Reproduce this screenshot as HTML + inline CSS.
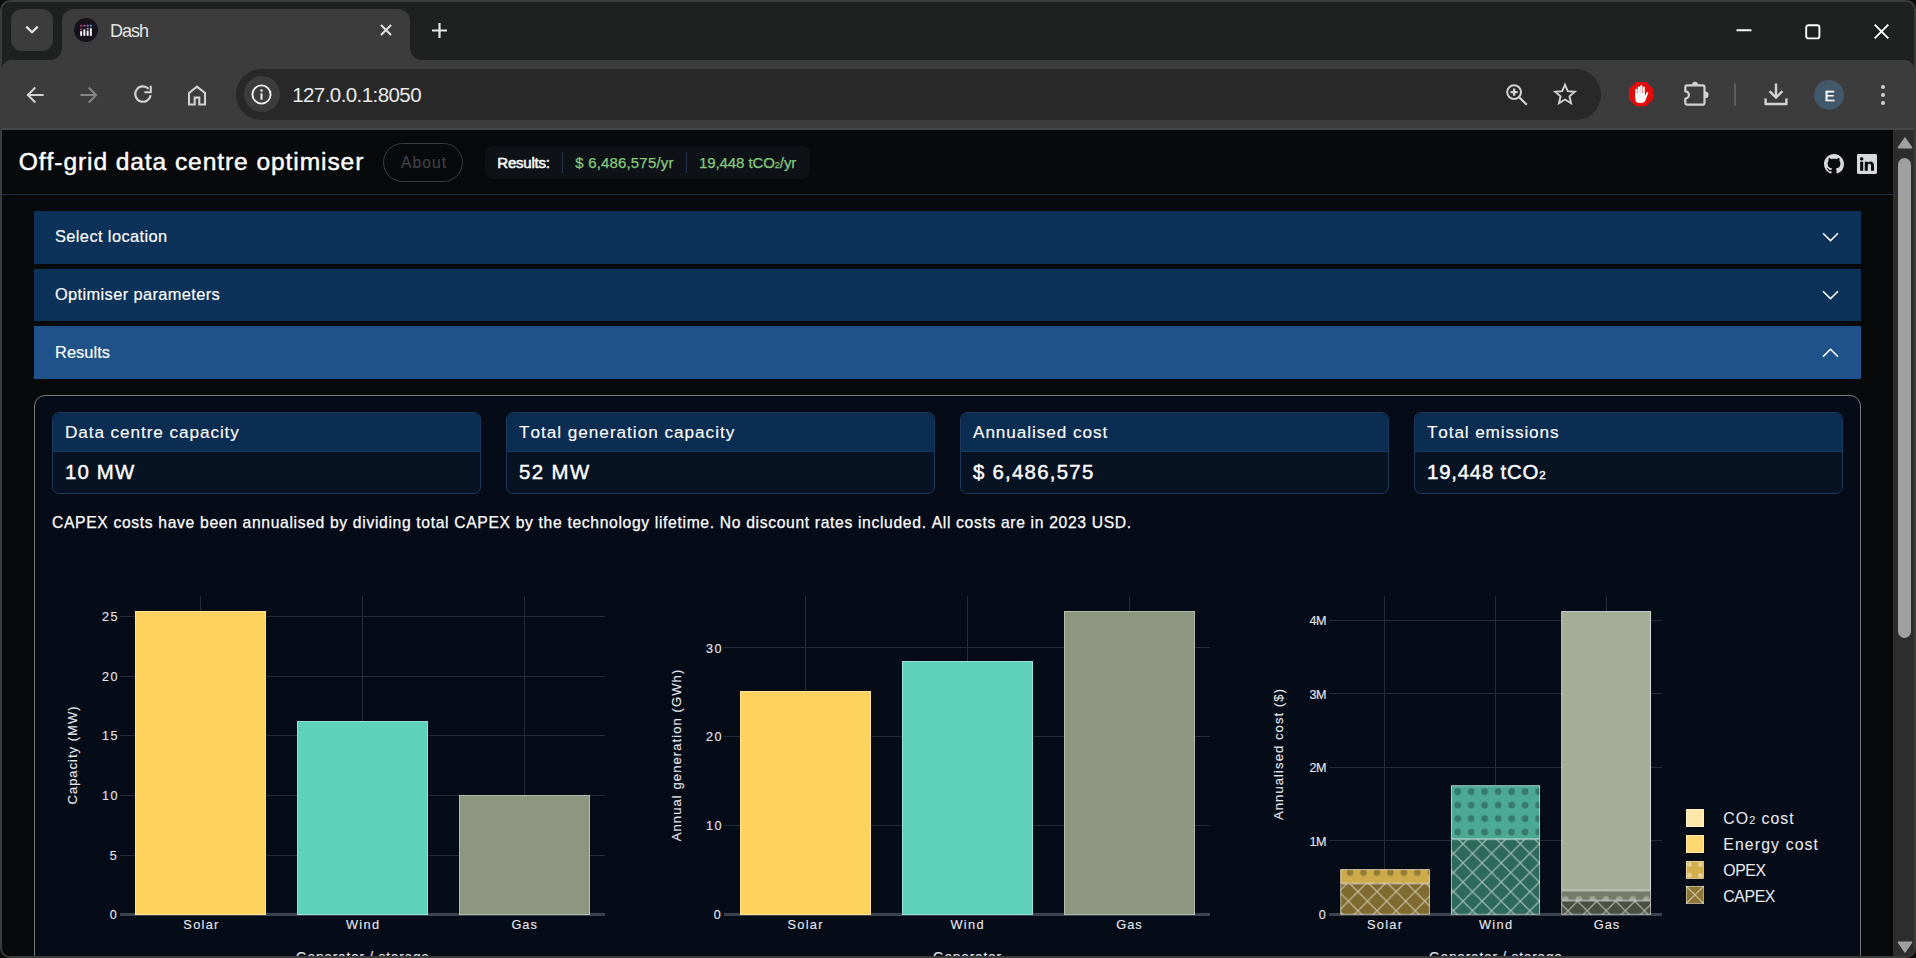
<!DOCTYPE html>
<html><head><meta charset="utf-8"><title>Dash</title>
<style>
html,body{margin:0;padding:0;background:#0d0d0d;}
body{width:1916px;height:958px;overflow:hidden;position:relative;font-family:"Liberation Sans",sans-serif;font-kerning:none;}
.r{position:absolute;box-sizing:border-box;}
.t{position:absolute;white-space:pre;line-height:1;font-family:"Liberation Sans",sans-serif;}
svg{position:absolute;overflow:visible;}
#win{position:absolute;left:0;top:0;width:1916px;height:958px;box-sizing:border-box;border:2px solid #3b3b3b;border-radius:10px;background:#1f2120;overflow:hidden;}
#in{position:absolute;left:-2px;top:-2px;width:1916px;height:958px;}
</style></head><body>
<div id="win"><div id="in">

<div class="r" style="left:11px;top:9px;width:42px;height:42px;background:#3c3c3c;border-radius:11px;"></div>
<svg style="left:24px;top:24px" width="16" height="12" viewBox="0 0 16 12"><path d="M2.3 2.6 L8 8.2 L13.7 2.6" fill="none" stroke="#e3e3e3" stroke-width="2.3"/></svg>
<div class="r" style="left:62px;top:9px;width:348px;height:52px;background:#3c3c3c;border-radius:12px 12px 0 0;"></div>
<svg style="left:50px;top:48px" width="12" height="12" viewBox="0 0 12 12"><path d="M12 0 V12 H0 A12 12 0 0 0 12 0Z" fill="#3c3c3c"/></svg>
<svg style="left:410px;top:48px" width="12" height="12" viewBox="0 0 12 12"><path d="M0 0 V12 H12 A12 12 0 0 1 0 0Z" fill="#3c3c3c"/></svg>
<div class="r" style="left:2px;top:60px;width:1912px;height:69px;background:#3c3c3c;border-radius:9px 9px 0 0;"></div>
<div class="r" style="left:2px;top:128px;width:1912px;height:2px;background:#474747;"></div>
<svg style="left:73.5px;top:18px" width="24" height="24" viewBox="0 0 24 24">
<circle cx="12" cy="12" r="12" fill="#15121b"/>
<rect x="6.2" y="13.2" width="1.9" height="4.6" fill="#fff"/><rect x="9.4" y="11.4" width="1.9" height="6.4" fill="#fff"/>
<rect x="12.7" y="12.6" width="1.9" height="5.2" fill="#fff"/><rect x="15.9" y="10.2" width="1.9" height="7.6" fill="#fff"/>
<rect x="6.2" y="10.6" width="1.9" height="1.7" fill="#e0457b"/><rect x="6.2" y="6.8" width="1.9" height="1.7" fill="#d6336c"/>
<rect x="9.4" y="6.8" width="1.9" height="1.7" fill="#d94f8e"/><rect x="12.7" y="6.8" width="1.9" height="1.7" fill="#a678d8"/>
<rect x="12.7" y="10" width="1.9" height="1.7" fill="#b88be0"/><rect x="15.9" y="6.8" width="1.9" height="1.7" fill="#52b6e6"/>
</svg>
<span class="t" style="top:22.26px;font-size:18px;color:#e3e3e3;letter-spacing:-1.007px;left:110.00px;">Dash</span>
<svg style="left:379.5px;top:24px" width="12" height="12" viewBox="0 0 12 12"><path d="M1 1 L11 11 M11 1 L1 11" stroke="#e3e3e3" stroke-width="2" fill="none"/></svg>
<svg style="left:432px;top:22.5px" width="15" height="15" viewBox="0 0 15 15"><path d="M7.5 0 V15 M0 7.5 H15" stroke="#e3e3e3" stroke-width="2.2" fill="none"/></svg>
<svg style="left:1736px;top:28.5px" width="16" height="3" viewBox="0 0 16 3"><rect x="0.5" y="0.3" width="15" height="2" rx="0.6" fill="#fff"/></svg>
<svg style="left:1805px;top:23.5px" width="16" height="16" viewBox="0 0 16 16"><rect x="1.2" y="1.2" width="13.2" height="13.2" rx="2.2" fill="none" stroke="#fff" stroke-width="1.9"/></svg>
<svg style="left:1874px;top:23.5px" width="15" height="15" viewBox="0 0 15 15"><path d="M0.7 0.7 L14.3 14.3 M14.3 0.7 L0.7 14.3" stroke="#fff" stroke-width="1.9" fill="none"/></svg>
<svg style="left:25.600px;top:85.5px" width="18" height="18" viewBox="0 0 18 18"><path d="M17.6 9 H2.4 M9.3 1.6 L1.9 9 L9.3 16.4" stroke="#d2d2d2" stroke-width="2.1" fill="none"/></svg>
<svg style="left:80px;top:85.5px" width="18" height="18" viewBox="0 0 18 18"><path d="M0.4 9 H15.6 M8.7 1.6 L16.1 9 L8.7 16.4" stroke="#858585" stroke-width="2.1" fill="none"/></svg>
<svg style="left:133px;top:84px" width="20" height="20" viewBox="0 0 20 20"><path d="M17.600 11.2 A7.700 7.700 0 1 1 15.6 4.8" stroke="#d2d2d2" stroke-width="2.1" fill="none"/><path d="M17.800 1.8 V8.2 H11.400" stroke="#d2d2d2" stroke-width="2.1" fill="none"/></svg>
<svg style="left:187px;top:84px" width="20" height="22" viewBox="0 0 20 22"><path d="M2 20.5 V9 L10 2.6 L18 9 V20.5 H12.3 V13.6 H7.7 V20.5 Z" stroke="#d2d2d2" stroke-width="2.1" fill="none"/></svg>
<div class="r" style="left:236px;top:69px;width:1365px;height:51px;background:#282828;border-radius:26px;"></div>
<div class="r" style="left:243.5px;top:76.4px;width:36px;height:36px;background:#3c3c3c;border-radius:18px;"></div>
<svg style="left:251px;top:84.4px" width="21" height="21" viewBox="0 0 21 21"><circle cx="10.5" cy="10.5" r="9.1" fill="none" stroke="#f0f0f0" stroke-width="1.9"/><rect x="9.5" y="9.3" width="2" height="6.4" fill="#f0f0f0"/><circle cx="10.5" cy="6.4" r="1.25" fill="#f0f0f0"/></svg>
<span class="t" style="top:85.15px;font-size:20.5px;color:#e9e9e9;letter-spacing:-0.569px;left:292.20px;">127.0.0.1:8050</span>
<svg style="left:1504px;top:82px" width="26" height="26" viewBox="0 0 26 26"><circle cx="10.1" cy="10.1" r="6.9" fill="none" stroke="#d2d2d2" stroke-width="2"/><path d="M15.2 15.2 L22.8 22.8" stroke="#d2d2d2" stroke-width="2.2"/><path d="M10.1 6.5 V13.7 M6.5 10.1 H13.700" stroke="#d2d2d2" stroke-width="2.3"/></svg>
<svg style="left:1553px;top:82px" width="24" height="24" viewBox="0 0 24 24"><path d="M12 2.6 L14.75 9.1 L21.8 9.7 L16.45 14.3 L18.05 21.2 L12 17.5 L5.95 21.2 L7.55 14.3 L2.2 9.7 L9.25 9.1 Z" fill="none" stroke="#d2d2d2" stroke-width="1.9" stroke-linejoin="miter"/></svg>
<svg style="left:1628.6px;top:82.1px" width="24.3" height="24.3" viewBox="0 0 24.3 24.3"><path d="M7.1 0 H17.2 L24.3 7.1 V17.2 L17.2 24.3 H7.1 L0 17.2 V7.1 Z" fill="#e30b0b"/>
<g fill="#fff"><rect x="6.3" y="6.7" width="2.15" height="9" rx="1.05"/><rect x="8.75" y="4.5" width="2.15" height="10" rx="1.05"/><rect x="11.2" y="3.0" width="2.15" height="11" rx="1.05"/><rect x="13.65" y="4.6" width="2.15" height="10" rx="1.05"/>
<path d="M6.3 11.5 H15.8 V14.6 L17.3 10.900 Q17.9 9.7 18.8 10.1 Q19.500 10.5 19.1 11.6 L16.6 18 Q15.500 21 12.2 21 H10.900 Q6.3 21 6.3 16.4 Z"/></g></svg>
<svg style="left:1683px;top:80px" width="28" height="28" viewBox="0 0 28 28"><circle cx="12" cy="4.6" r="2.9" fill="#d2d2d2"/><circle cx="22.200" cy="14.900" r="3.3" fill="#d2d2d2"/>
<path d="M4.3 5.3 H19.500 Q21.500 5.3 21.500 7.3 V22.700 Q21.500 24.700 19.500 24.700 H4.3 Q2.3 24.700 2.3 22.700 V18.5 A3.6 3.6 0 0 0 2.3 11.300 V7.3 Q2.3 5.3 4.3 5.3 Z" fill="#3c3c3c" stroke="#d2d2d2" stroke-width="2.2" stroke-linejoin="round"/></svg>
<div class="r" style="left:1733.5px;top:83px;width:2px;height:23px;background:#5c5c5c;border-radius:1px;"></div>
<svg style="left:1764px;top:82px" width="24" height="24" viewBox="0 0 24 24"><path d="M12 1.5 V15.2 M5.6 9.2 L12 15.6 L18.4 9.2" stroke="#d2d2d2" stroke-width="2.4" fill="none"/><path d="M1.6 16.6 V22 H22.4 V16.6" stroke="#d2d2d2" stroke-width="2.4" fill="none" stroke-linejoin="round"/></svg>
<div class="r" style="left:1814px;top:80px;width:30px;height:30px;background:#42596b;border-radius:15px;"></div>
<span class="t" style="top:87.68px;font-size:15.5px;color:#fff;letter-spacing:-1.139px;left:1824.40px;-webkit-text-stroke:0.3px #fff;">E</span>
<div class="r" style="left:1880.8px;top:84.6px;width:4.4px;height:4.4px;background:#d2d2d2;border-radius:50%;"></div>
<div class="r" style="left:1880.8px;top:92.8px;width:4.4px;height:4.4px;background:#d2d2d2;border-radius:50%;"></div>
<div class="r" style="left:1880.8px;top:101.0px;width:4.4px;height:4.4px;background:#d2d2d2;border-radius:50%;"></div>
<div class="r" style="left:2px;top:130px;width:1891px;height:826px;background:#08090b;"></div>
<div class="r" style="left:1893px;top:130px;width:21px;height:826px;background:#2d2d2d;"></div>
<svg style="left:1896.5px;top:137px" width="16" height="12" viewBox="0 0 16 12"><path d="M8 1.2 L14.6 10.6 H1.4 Z" fill="#a0a0a0" stroke="#a0a0a0" stroke-width="1.6" stroke-linejoin="round"/></svg>
<svg style="left:1896.5px;top:941px" width="16" height="12" viewBox="0 0 16 12"><path d="M8 10.8 L14.6 1.4 H1.4 Z" fill="#a0a0a0" stroke="#a0a0a0" stroke-width="1.6" stroke-linejoin="round"/></svg>
<div class="r" style="left:1898px;top:158px;width:13px;height:479.5px;background:#a0a0a0;border-radius:6.5px;"></div>
<div class="r" style="left:2px;top:194px;width:1891px;height:1px;background:#1e2d45;"></div>
<span class="t" style="top:150.48px;font-size:24.6px;color:#fff;letter-spacing:0.899px;left:18.80px;-webkit-text-stroke:0.45px #fff;">Off-grid data centre optimiser</span>
<div class="r" style="left:383px;top:143px;width:80px;height:39px;background:transparent;border:1px solid #3a3b3d;border-radius:20px;"></div>
<span class="t" style="top:154.99px;font-size:15.6px;color:#3d4147;letter-spacing:1.058px;left:401.00px;-webkit-text-stroke:0.2px #3d4147;">About</span>
<div class="r" style="left:485px;top:146px;width:324.5px;height:33px;background:#0e1217;border-radius:8px;"></div>
<span class="t" style="top:155.00px;font-size:15px;color:#fff;letter-spacing:-0.212px;left:497.30px;-webkit-text-stroke:0.5px #fff;">Results:</span>
<div class="r" style="left:562px;top:152px;width:1px;height:21px;background:#27364d;"></div>
<div class="r" style="left:686px;top:152px;width:1px;height:21px;background:#27364d;"></div>
<span class="t" style="top:155.00px;font-size:15px;color:#86c97d;letter-spacing:0.169px;left:575.30px;-webkit-text-stroke:0.25px #86c97d;">$ 6,486,575/yr</span>
<span class="t" style="top:155.00px;font-size:15px;color:#86c97d;letter-spacing:-0.092px;left:699.00px;-webkit-text-stroke:0.25px #86c97d;">19,448 tCO<span style="font-size:9px;letter-spacing:0">2</span>/yr</span>
<svg style="left:1824px;top:154px" width="20" height="20" viewBox="0 0 16 16"><path fill="#d6dadb" d="M8 0C3.58 0 0 3.58 0 8c0 3.54 2.29 6.53 5.47 7.59.4.07.55-.17.55-.38 0-.19-.01-.82-.01-1.49-2.01.37-2.53-.49-2.69-.94-.09-.23-.48-.94-.82-1.13-.28-.15-.68-.52-.01-.53.63-.01 1.08.58 1.23.82.72 1.21 1.87.87 2.33.66.07-.52.28-.87.51-1.07-1.78-.2-3.64-.89-3.64-3.95 0-.87.31-1.59.82-2.15-.08-.2-.36-1.02.08-2.12 0 0 .67-.21 2.2.82.64-.18 1.32-.27 2-.27.68 0 1.36.09 2 .27 1.53-1.04 2.2-.82 2.2-.82.44 1.1.16 1.92.08 2.12.51.56.82 1.27.82 2.15 0 3.07-1.87 3.75-3.65 3.95.29.25.54.73.54 1.48 0 1.07-.01 1.93-.01 2.2 0 .21.15.46.55.38A8.012 8.012 0 0 0 16 8c0-4.420-3.58-8-8-8z"/></svg>
<svg style="left:1857px;top:154px" width="20" height="20" viewBox="0 0 16 16"><path fill="#d6dadb" d="M0 1.146C0 .513.526 0 1.175 0h13.65C15.474 0 16 .513 16 1.146v13.708c0 .633-.526 1.146-1.175 1.146H1.175C.526 16 0 15.487 0 14.854V1.146zm4.943 12.248V6.169H2.542v7.225h2.401zm-1.200-8.212c.837 0 1.358-.554 1.358-1.248-.015-.709-.52-1.248-1.342-1.248-.822 0-1.359.54-1.359 1.248 0 .694.521 1.248 1.327 1.248h.016zm4.908 8.212V9.359c0-.216.016-.432.080-.586.173-.431.568-.878 1.232-.878.869 0 1.216.662 1.216 1.634v3.865h2.401V9.250c0-2.220-1.184-3.252-2.764-3.252-1.274 0-1.845.7-2.165 1.193v.025h-.016a5.540 5.540 0 0 1 .016-.025V6.169h-2.400c.03.678 0 7.225 0 7.225h2.400z"/></svg>
<div class="r" style="left:34px;top:211px;width:1827px;height:53px;background:#0d3259;"></div>
<div class="r" style="left:34px;top:269px;width:1827px;height:52px;background:#0d3259;"></div>
<div class="r" style="left:34px;top:326px;width:1827px;height:53px;background:#1e5288;"></div>
<span class="t" style="top:228.12px;font-size:16.4px;color:#fff;letter-spacing:0.395px;left:55.00px;-webkit-text-stroke:0.15px #fff;">Select location</span>
<span class="t" style="top:286.12px;font-size:16.4px;color:#fff;letter-spacing:0.375px;left:55.00px;-webkit-text-stroke:0.15px #fff;">Optimiser parameters</span>
<span class="t" style="top:344.12px;font-size:16.4px;color:#fff;letter-spacing:0.052px;left:55.00px;-webkit-text-stroke:0.15px #fff;">Results</span>
<svg style="left:1821.5px;top:231.9px" width="17" height="10" viewBox="0 0 17 10"><path d="M1 1.2 L8.5 8.6 L16 1.2" fill="none" stroke="#fff" stroke-width="1.5"/></svg>
<svg style="left:1821.5px;top:289.8px" width="17" height="10" viewBox="0 0 17 10"><path d="M1 1.2 L8.5 8.6 L16 1.2" fill="none" stroke="#fff" stroke-width="1.5"/></svg>
<svg style="left:1821.5px;top:347.6px" width="17" height="10" viewBox="0 0 17 10"><path d="M1 8.6 L8.5 1.2 L16 8.6" fill="none" stroke="#fff" stroke-width="1.5"/></svg>
<div class="r" style="left:34px;top:395px;width:1827px;height:600px;background:#060b18;border:1px solid #74777c;border-radius:11px;"></div>
<div class="r" style="left:52px;top:412px;width:429px;height:82px;border:1px solid #1c395c;border-radius:7px;background:#071323;overflow:hidden;"><div style="height:38px;background:#0c2d52;border-bottom:1px solid #1c395c;"></div></div>
<span class="t" style="top:424.24px;font-size:17.2px;color:#fff;letter-spacing:0.906px;left:65.00px;-webkit-text-stroke:0.12px #fff;">Data centre capacity</span>
<span class="t" style="top:461.73px;font-size:20.4px;color:#fff;letter-spacing:1.173px;left:65.00px;-webkit-text-stroke:0.42px #fff;">10 MW</span>
<div class="r" style="left:506px;top:412px;width:429px;height:82px;border:1px solid #1c395c;border-radius:7px;background:#071323;overflow:hidden;"><div style="height:38px;background:#0c2d52;border-bottom:1px solid #1c395c;"></div></div>
<span class="t" style="top:424.24px;font-size:17.2px;color:#fff;letter-spacing:0.968px;left:519.00px;-webkit-text-stroke:0.12px #fff;">Total generation capacity</span>
<span class="t" style="top:461.73px;font-size:20.4px;color:#fff;letter-spacing:1.398px;left:519.00px;-webkit-text-stroke:0.42px #fff;">52 MW</span>
<div class="r" style="left:960px;top:412px;width:429px;height:82px;border:1px solid #1c395c;border-radius:7px;background:#071323;overflow:hidden;"><div style="height:38px;background:#0c2d52;border-bottom:1px solid #1c395c;"></div></div>
<span class="t" style="top:424.24px;font-size:17.2px;color:#fff;letter-spacing:0.919px;left:973.00px;-webkit-text-stroke:0.12px #fff;">Annualised cost</span>
<span class="t" style="top:461.73px;font-size:20.4px;color:#fff;letter-spacing:1.253px;left:973.00px;-webkit-text-stroke:0.42px #fff;">$ 6,486,575</span>
<div class="r" style="left:1414px;top:412px;width:429px;height:82px;border:1px solid #1c395c;border-radius:7px;background:#071323;overflow:hidden;"><div style="height:38px;background:#0c2d52;border-bottom:1px solid #1c395c;"></div></div>
<span class="t" style="top:424.24px;font-size:17.2px;color:#fff;letter-spacing:0.866px;left:1427.00px;-webkit-text-stroke:0.12px #fff;">Total emissions</span>
<span class="t" style="top:461.73px;font-size:20.4px;color:#fff;letter-spacing:0.795px;left:1427.00px;-webkit-text-stroke:0.42px #fff;">19,448 tCO<span style="font-size:11.5px;letter-spacing:0">2</span></span>
<span class="t" style="top:515.21px;font-size:15.7px;color:#fff;letter-spacing:0.654px;left:52.00px;-webkit-text-stroke:0.25px #fff;">CAPEX costs have been annualised by dividing total CAPEX by the technology lifetime. No discount rates included. All costs are in 2023 USD.</span>
<div class="r" style="left:120px;top:854.5px;width:485px;height:1px;background:#252b38;"></div>
<div class="r" style="left:120px;top:794.9px;width:485px;height:1px;background:#252b38;"></div>
<div class="r" style="left:120px;top:735.1px;width:485px;height:1px;background:#252b38;"></div>
<div class="r" style="left:120px;top:675.5px;width:485px;height:1px;background:#252b38;"></div>
<div class="r" style="left:120px;top:615.8px;width:485px;height:1px;background:#252b38;"></div>
<div class="r" style="left:200.3px;top:596px;width:1px;height:318.6px;background:#252b38;"></div>
<div class="r" style="left:362.0px;top:596px;width:1px;height:318.6px;background:#252b38;"></div>
<div class="r" style="left:523.7px;top:596px;width:1px;height:318.6px;background:#252b38;"></div>
<div class="r" style="left:120px;top:913.4px;width:485px;height:2.4px;background:#3c424e;"></div>
<span class="t" style="top:909.33px;font-size:12.6px;color:#e4e7ec;letter-spacing:0.742px;left:109.65px;-webkit-text-stroke:0.12px #e4e7ec;">0</span>
<span class="t" style="top:849.73px;font-size:12.6px;color:#e4e7ec;letter-spacing:0.742px;left:109.65px;-webkit-text-stroke:0.12px #e4e7ec;">5</span>
<span class="t" style="top:790.13px;font-size:12.6px;color:#e4e7ec;letter-spacing:1.484px;left:101.90px;-webkit-text-stroke:0.12px #e4e7ec;">10</span>
<span class="t" style="top:730.33px;font-size:12.6px;color:#e4e7ec;letter-spacing:1.484px;left:101.90px;-webkit-text-stroke:0.12px #e4e7ec;">15</span>
<span class="t" style="top:670.73px;font-size:12.6px;color:#e4e7ec;letter-spacing:1.484px;left:101.90px;-webkit-text-stroke:0.12px #e4e7ec;">20</span>
<span class="t" style="top:611.03px;font-size:12.6px;color:#e4e7ec;letter-spacing:1.484px;left:101.90px;-webkit-text-stroke:0.12px #e4e7ec;">25</span>
<span class="t" style="top:919.26px;font-size:12.8px;color:#e4e7ec;letter-spacing:1.279px;left:183.33px;-webkit-text-stroke:0.12px #e4e7ec;">Solar</span>
<span class="t" style="top:919.26px;font-size:12.8px;color:#e4e7ec;letter-spacing:1.279px;left:346.00px;-webkit-text-stroke:0.12px #e4e7ec;">Wind</span>
<span class="t" style="top:919.26px;font-size:12.8px;color:#e4e7ec;letter-spacing:1.012px;left:511.42px;-webkit-text-stroke:0.12px #e4e7ec;">Gas</span>
<span class="t" style="left:22.50px;top:748.90px;width:98.00px;height:13px;font-size:13px;color:#e4e7ec;letter-spacing:1.004px;transform:rotate(-90deg);transform-origin:50% 50%;line-height:13px;-webkit-text-stroke:0.12px #e4e7ec;">Capacity (MW)</span>
<span class="t" style="top:951.32px;font-size:13.8px;color:#e4e7ec;letter-spacing:0.741px;left:296.00px;-webkit-text-stroke:0.12px #e4e7ec;">Generator / storage</span>
<div class="r" style="left:135.2px;top:611.2px;width:130.8px;height:303.4px;background:#fed35d;box-shadow:inset 0 0 0 0.8px rgba(255,255,255,0.45);"></div>
<div class="r" style="left:297.2px;top:720.9px;width:130.7px;height:193.7px;background:#5ed2b8;box-shadow:inset 0 0 0 0.8px rgba(255,255,255,0.45);"></div>
<div class="r" style="left:459.3px;top:795px;width:130.7px;height:119.6px;background:#8f967f;box-shadow:inset 0 0 0 0.8px rgba(255,255,255,0.45);"></div>
<div class="r" style="left:724px;top:825.1px;width:486px;height:1px;background:#252b38;"></div>
<div class="r" style="left:724px;top:736.2px;width:486px;height:1px;background:#252b38;"></div>
<div class="r" style="left:724px;top:647.4px;width:486px;height:1px;background:#252b38;"></div>
<div class="r" style="left:804.5px;top:596px;width:1px;height:318.6px;background:#252b38;"></div>
<div class="r" style="left:966.5px;top:596px;width:1px;height:318.6px;background:#252b38;"></div>
<div class="r" style="left:1128.5px;top:596px;width:1px;height:318.6px;background:#252b38;"></div>
<div class="r" style="left:724px;top:913.4px;width:486px;height:2.4px;background:#3c424e;"></div>
<span class="t" style="top:909.33px;font-size:12.6px;color:#e4e7ec;letter-spacing:0.742px;left:713.65px;-webkit-text-stroke:0.12px #e4e7ec;">0</span>
<span class="t" style="top:820.33px;font-size:12.6px;color:#e4e7ec;letter-spacing:1.484px;left:705.90px;-webkit-text-stroke:0.12px #e4e7ec;">10</span>
<span class="t" style="top:731.43px;font-size:12.6px;color:#e4e7ec;letter-spacing:1.484px;left:705.90px;-webkit-text-stroke:0.12px #e4e7ec;">20</span>
<span class="t" style="top:642.63px;font-size:12.6px;color:#e4e7ec;letter-spacing:1.484px;left:705.90px;-webkit-text-stroke:0.12px #e4e7ec;">30</span>
<span class="t" style="top:919.26px;font-size:12.8px;color:#e4e7ec;letter-spacing:1.279px;left:787.50px;-webkit-text-stroke:0.12px #e4e7ec;">Solar</span>
<span class="t" style="top:919.26px;font-size:12.8px;color:#e4e7ec;letter-spacing:1.279px;left:950.50px;-webkit-text-stroke:0.12px #e4e7ec;">Wind</span>
<span class="t" style="top:919.26px;font-size:12.8px;color:#e4e7ec;letter-spacing:1.012px;left:1116.25px;-webkit-text-stroke:0.12px #e4e7ec;">Gas</span>
<span class="t" style="left:591.35px;top:748.90px;width:171.50px;height:13px;font-size:13px;color:#e4e7ec;letter-spacing:1.095px;transform:rotate(-90deg);transform-origin:50% 50%;line-height:13px;-webkit-text-stroke:0.12px #e4e7ec;">Annual generation (GWh)</span>
<span class="t" style="top:951.32px;font-size:13.8px;color:#e4e7ec;letter-spacing:0.733px;left:933.00px;-webkit-text-stroke:0.12px #e4e7ec;">Generator</span>
<div class="r" style="left:740.2px;top:690.9px;width:130.8px;height:223.7px;background:#fed35d;box-shadow:inset 0 0 0 0.8px rgba(255,255,255,0.45);"></div>
<div class="r" style="left:902px;top:660.9px;width:130.8px;height:253.7px;background:#5ed2b8;box-shadow:inset 0 0 0 0.8px rgba(255,255,255,0.45);"></div>
<div class="r" style="left:1064.2px;top:611.2px;width:130.8px;height:303.4px;background:#8f967f;box-shadow:inset 0 0 0 0.8px rgba(255,255,255,0.45);"></div>
<div class="r" style="left:1329px;top:840.4px;width:333px;height:1px;background:#252b38;"></div>
<div class="r" style="left:1329px;top:766.7px;width:333px;height:1px;background:#252b38;"></div>
<div class="r" style="left:1329px;top:693.3px;width:333px;height:1px;background:#252b38;"></div>
<div class="r" style="left:1329px;top:619.7px;width:333px;height:1px;background:#252b38;"></div>
<div class="r" style="left:1384.0px;top:596px;width:1px;height:318.6px;background:#252b38;"></div>
<div class="r" style="left:1495.0px;top:596px;width:1px;height:318.6px;background:#252b38;"></div>
<div class="r" style="left:1606.0px;top:596px;width:1px;height:318.6px;background:#252b38;"></div>
<div class="r" style="left:1329px;top:913.4px;width:333px;height:2.4px;background:#3c424e;"></div>
<span class="t" style="top:909.33px;font-size:12.6px;color:#e4e7ec;letter-spacing:0.742px;left:1318.65px;-webkit-text-stroke:0.12px #e4e7ec;">0</span>
<span class="t" style="top:835.63px;font-size:12.6px;color:#e4e7ec;letter-spacing:-0.504px;left:1309.40px;-webkit-text-stroke:0.12px #e4e7ec;">1M</span>
<span class="t" style="top:761.93px;font-size:12.6px;color:#e4e7ec;letter-spacing:-0.504px;left:1309.40px;-webkit-text-stroke:0.12px #e4e7ec;">2M</span>
<span class="t" style="top:688.53px;font-size:12.6px;color:#e4e7ec;letter-spacing:-0.504px;left:1309.40px;-webkit-text-stroke:0.12px #e4e7ec;">3M</span>
<span class="t" style="top:614.93px;font-size:12.6px;color:#e4e7ec;letter-spacing:-0.504px;left:1309.40px;-webkit-text-stroke:0.12px #e4e7ec;">4M</span>
<span class="t" style="top:919.26px;font-size:12.8px;color:#e4e7ec;letter-spacing:1.279px;left:1367.00px;-webkit-text-stroke:0.12px #e4e7ec;">Solar</span>
<span class="t" style="top:919.26px;font-size:12.8px;color:#e4e7ec;letter-spacing:1.279px;left:1479.00px;-webkit-text-stroke:0.12px #e4e7ec;">Wind</span>
<span class="t" style="top:919.26px;font-size:12.8px;color:#e4e7ec;letter-spacing:1.012px;left:1593.75px;-webkit-text-stroke:0.12px #e4e7ec;">Gas</span>
<span class="t" style="left:1213.20px;top:748.30px;width:131.00px;height:13px;font-size:13px;color:#e4e7ec;letter-spacing:1.095px;transform:rotate(-90deg);transform-origin:50% 50%;line-height:13px;-webkit-text-stroke:0.12px #e4e7ec;">Annualised cost ($)</span>
<span class="t" style="top:951.32px;font-size:13.8px;color:#e4e7ec;letter-spacing:0.741px;left:1429.00px;-webkit-text-stroke:0.12px #e4e7ec;">Generator / storage</span>
<svg width="0" height="0" style="left:0;top:0"><defs>
<pattern id="dotD" patternUnits="userSpaceOnUse" x="1343.26" y="784.96" width="13.47" height="13.47"><circle cx="6.735" cy="6.735" r="3.35" fill="#000" fill-opacity="0.28"/></pattern>
<pattern id="dotL" patternUnits="userSpaceOnUse" x="1343.26" y="784.96" width="13.47" height="13.47"><circle cx="6.735" cy="6.735" r="3.35" fill="#fff" fill-opacity="0.30"/></pattern>
<pattern id="xL" patternUnits="userSpaceOnUse" x="1463.0" y="843.9" width="19.1" height="19.1"><path d="M-2 -2 L21.1 21.1 M-2 21.1 L21.1 -2" stroke="#fff" stroke-opacity="0.52" stroke-width="1.25" fill="none"/></pattern>
</defs></svg>
<svg style="left:0;top:0" width="1916" height="958"><rect x="1340.4" y="883.5" width="89.4" height="31.1" fill="#7f6b2f"/><rect x="1340.4" y="883.5" width="89.4" height="31.1" fill="url(#xL)"/><rect x="1340.8000000000002" y="883.9" width="88.6" height="30.3" fill="none" stroke="rgba(255,255,255,0.6)" stroke-width="0.9"/></svg>
<svg style="left:0;top:0" width="1916" height="958"><rect x="1340.4" y="869.3" width="89.4" height="14.2" fill="#cdab4b"/><rect x="1340.4" y="869.3" width="89.4" height="14.2" fill="url(#dotD)"/><rect x="1340.8000000000002" y="869.6999999999999" width="88.6" height="13.4" fill="none" stroke="rgba(255,255,255,0.6)" stroke-width="0.9"/></svg>
<svg style="left:0;top:0" width="1916" height="958"><rect x="1451" y="839.3" width="89.0" height="75.3" fill="#2d6a5b"/><rect x="1451" y="839.3" width="89.0" height="75.3" fill="url(#xL)"/><rect x="1451.4" y="839.6999999999999" width="88.2" height="74.5" fill="none" stroke="rgba(255,255,255,0.6)" stroke-width="0.9"/></svg>
<svg style="left:0;top:0" width="1916" height="958"><rect x="1451" y="785.4" width="89.0" height="53.9" fill="#4ba994"/><rect x="1451" y="785.4" width="89.0" height="53.9" fill="url(#dotD)"/><rect x="1451.4" y="785.8" width="88.2" height="53.1" fill="none" stroke="rgba(255,255,255,0.6)" stroke-width="0.9"/></svg>
<svg style="left:0;top:0" width="1916" height="958"><rect x="1561.3" y="900.6" width="89.7" height="14.0" fill="#4b4f3f"/><rect x="1561.3" y="900.6" width="89.7" height="14.0" fill="url(#xL)"/><rect x="1561.7" y="901.0" width="88.9" height="13.2" fill="none" stroke="rgba(255,255,255,0.6)" stroke-width="0.9"/></svg>
<svg style="left:0;top:0" width="1916" height="958"><rect x="1561.3" y="890.5" width="89.7" height="10.1" fill="#757c68"/><rect x="1561.3" y="890.5" width="89.7" height="10.1" fill="url(#dotL)"/><rect x="1561.7" y="890.9" width="88.9" height="9.3" fill="none" stroke="rgba(255,255,255,0.6)" stroke-width="0.9"/></svg>
<svg style="left:0;top:0" width="1916" height="958"><rect x="1561.3" y="611.2" width="89.7" height="279.3" fill="#a5ad99"/><rect x="1561.7" y="611.6" width="88.9" height="278.5" fill="none" stroke="rgba(255,255,255,0.6)" stroke-width="0.9"/></svg>
<div class="r" style="left:1686.4px;top:809.2px;width:17.8px;height:17.8px;background:#fee9a9;box-shadow:inset 0 0 0 0.8px rgba(255,255,255,0.5);"></div>
<div class="r" style="left:1686.4px;top:835px;width:17.8px;height:17.8px;background:#fed871;box-shadow:inset 0 0 0 0.8px rgba(255,255,255,0.5);"></div>
<svg style="left:1686.4px;top:860.6px" width="17.8" height="17.8" viewBox="0 0 17.8 17.8"><rect width="17.8" height="17.8" fill="#d3ae4c"/>
<g fill="#fff" fill-opacity="0.42"><circle cx="3.4" cy="3.4" r="2.4"/><circle cx="14.4" cy="3.4" r="2.4"/><circle cx="3.4" cy="14.4" r="2.4"/><circle cx="14.4" cy="14.4" r="2.4"/></g>
<rect x="0.4" y="0.4" width="17" height="17" fill="none" stroke="#fff" stroke-opacity="0.5" stroke-width="0.9"/></svg>
<svg style="left:1686.4px;top:886.4px" width="17.8" height="17.8" viewBox="0 0 17.8 17.8"><rect width="17.8" height="17.8" fill="#8d7534"/>
<path d="M0 0 L17.8 17.8 M17.8 0 L0 17.8" stroke="#fff" stroke-opacity="0.5" stroke-width="1.2"/>
<rect x="0.4" y="0.4" width="17" height="17" fill="none" stroke="#fff" stroke-opacity="0.5" stroke-width="0.9"/></svg>
<span class="t" style="top:811.33px;font-size:15.8px;color:#e9ecf1;letter-spacing:1.071px;left:1723.30px;-webkit-text-stroke:0.05px #e9ecf1;">CO<span style="font-size:11px;letter-spacing:0.8px">2</span> cost</span>
<span class="t" style="top:837.33px;font-size:15.8px;color:#e9ecf1;letter-spacing:1.127px;left:1723.30px;-webkit-text-stroke:0.05px #e9ecf1;">Energy cost</span>
<span class="t" style="top:863.13px;font-size:15.8px;color:#e9ecf1;letter-spacing:-0.402px;left:1723.30px;-webkit-text-stroke:0.05px #e9ecf1;">OPEX</span>
<span class="t" style="top:888.83px;font-size:15.8px;color:#e9ecf1;letter-spacing:-0.367px;left:1723.30px;-webkit-text-stroke:0.05px #e9ecf1;">CAPEX</span>
</div></div>
</body></html>
